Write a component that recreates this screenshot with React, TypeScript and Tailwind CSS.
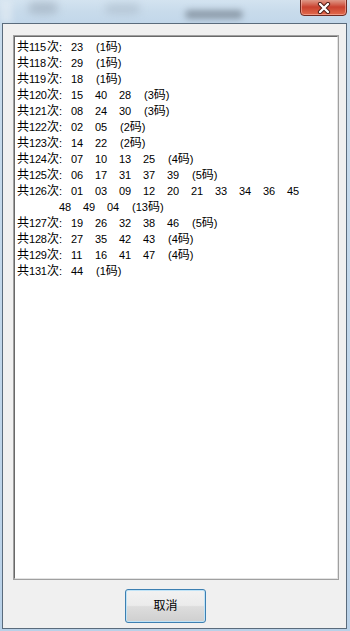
import React from "react";

type Line = { k?: string; indent?: boolean; n: string[]; c?: string };

const lines: Line[] = [
  { k: "115", n: ["23"], c: "1" },
  { k: "118", n: ["29"], c: "1" },
  { k: "119", n: ["18"], c: "1" },
  { k: "120", n: ["15", "40", "28"], c: "3" },
  { k: "121", n: ["08", "24", "30"], c: "3" },
  { k: "122", n: ["02", "05"], c: "2" },
  { k: "123", n: ["14", "22"], c: "2" },
  { k: "124", n: ["07", "10", "13", "25"], c: "4" },
  { k: "125", n: ["06", "17", "31", "37", "39"], c: "5" },
  { k: "126", n: ["01", "03", "09", "12", "20", "21", "33", "34", "36", "45"] },
  { indent: true, n: ["48", "49", "04"], c: "13" },
  { k: "127", n: ["19", "26", "32", "38", "46"], c: "5" },
  { k: "128", n: ["27", "35", "42", "43"], c: "4" },
  { k: "129", n: ["11", "16", "41", "47"], c: "4" },
  { k: "131", n: ["44"], c: "1" },
];

function Row({ l }: { l: Line }) {
  return (
    <div className="flex items-baseline h-[16px] whitespace-nowrap">
      {l.k && (
        <div className="flex items-baseline w-[54px] shrink-0">
          <span className="w-[12px] shrink-0 text-[12px]">共</span>
          <span className="w-[18px] shrink-0 text-[11px] tracking-[-0.2px]">{l.k}</span>
          <span className="w-[12px] shrink-0 text-[12px]">次</span>
          <span className="w-[12px] shrink-0 text-[11px]">:</span>
        </div>
      )}
      {l.indent && <div className="w-[42px] shrink-0" />}
      {l.n.map((x, j) => (
        <span key={j} className="w-[24px] shrink-0 text-[11px]">
          {x}
        </span>
      ))}
      {l.c && (
        <span className="pl-[1px] text-[11px]">
          ({l.c}
          <span className="text-[12px]">码</span>)
        </span>
      )}
    </div>
  );
}

export default function App() {
  return (
    <div className="w-[350px] h-[631px] flex flex-col bg-gradient-to-b from-[#c9dcec] to-[#b9d1e8] overflow-hidden font-[family-name:'Liberation_Sans','Noto_Sans_CJK_SC',sans-serif]">
      {/* Title bar (aero glass) */}
      <div className="relative h-[23px] shrink-0 bg-gradient-to-b from-[#d3e3f0] via-[#c8dbeb] to-[#c2d7ea] overflow-hidden">
        <div className="absolute left-[28px] top-[2px] w-[30px] h-[12px] rounded-full bg-[#9aa9b8] opacity-60 blur-[4px]" />
        <div className="absolute left-[105px] top-[4px] w-[35px] h-[10px] rounded-full bg-[#a9b9c8] opacity-60 blur-[4px]" />
        <div className="absolute left-[185px] top-[10px] w-[58px] h-[9px] rounded-full bg-[#55606c] opacity-50 blur-[3px]" />
        <div className="absolute left-[0px] top-[0px] w-[12px] h-[23px] bg-[#e6eef5] opacity-60 blur-[3px]" />
        {/* Close button */}
        <div className="absolute left-[300px] top-[-2px] w-[47px] h-[18px] rounded-b-[4px] border border-[#6e2a22] bg-gradient-to-b from-[#e0a394] via-[#c9412f] to-[#e26a4c] shadow-[inset_0_0_0_1px_rgba(255,200,190,0.5)] flex items-center justify-center">
          <svg width="14" height="12" viewBox="0 0 14 12" className="mt-[2px]">
            <path d="M3 2 L11 10 M11 2 L3 10" stroke="#4a1a14" strokeWidth="4.2" strokeLinecap="round" />
            <path d="M3 2 L11 10 M11 2 L3 10" stroke="#ffffff" strokeWidth="2.4" strokeLinecap="round" />
          </svg>
        </div>
      </div>

      {/* Window body */}
      <div className="flex-1 ml-[2px] mr-[3px] mb-[2px] border border-[#5a6b7c] bg-[#f0f0f0] flex flex-col">
        <div className="ml-[10px] mt-[11px] w-[326px] h-[545px] border border-[#a0a0a0] bg-white">
          <div className="w-full h-full border border-[#696969] border-r-[#e3e3e3] border-b-[#e3e3e3] pl-[2px] pt-[2px] leading-[16px] text-black flex flex-col">
            {lines.map((l, i) => (
              <Row key={i} l={l} />
            ))}
          </div>
        </div>
        <div className="mt-[9px] ml-[122px]">
          <button className="w-[81px] h-[34px] rounded-[3px] border border-[#3c7fb1] bg-[linear-gradient(to_bottom,#f2f2f2_0%,#ebebeb_48%,#dddddd_52%,#cfcfcf_100%)] shadow-[inset_0_0_0_1px_#bfe3f7] text-[12px] text-black flex items-center justify-center">
            取消
          </button>
        </div>
      </div>
    </div>
  );
}
